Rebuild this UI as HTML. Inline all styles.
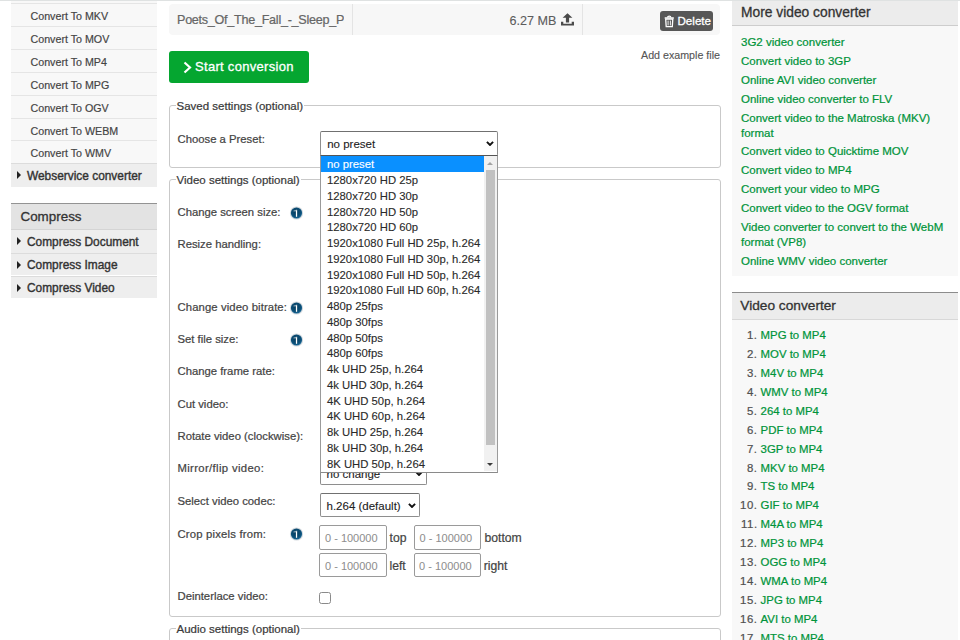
<!DOCTYPE html>
<html><head><meta charset="utf-8">
<style>
*{box-sizing:border-box;margin:0;padding:0}
html,body{width:960px;height:640px;overflow:hidden;background:#fff}
body{position:relative;font-family:"Liberation Sans",sans-serif;color:#444;-webkit-text-stroke:0.22px}
.a{position:absolute;white-space:nowrap}
.t{position:absolute;white-space:nowrap;height:16px;line-height:16px}
/* left sidebar */
.lrow{position:absolute;left:11px;width:146px;background:#f8f8f8;border-top:1.6px solid #e5e5e5}
.lrow span{position:absolute;left:19.5px;font-size:10.7px;color:#444;line-height:16px;top:3.9px;-webkit-text-stroke:.18px}
.grow{position:absolute;left:11px;width:146px;background:#eeeeee;border-top:1px solid #dcdcdc}
.grow span{position:absolute;left:16px;font-size:11.9px;color:#333;line-height:16px;top:3.6px;-webkit-text-stroke:.38px}
.tri{position:absolute;left:6px;top:7px;width:0;height:0;border-left:4.5px solid #222;border-top:4px solid transparent;border-bottom:4px solid transparent}
/* main */
.fs{position:absolute;left:169px;width:552px;border:1.5px solid #c9c9c9;border-radius:3px}
.lg{position:absolute;left:5.5px;top:-7.8px;background:#fff;padding:0 1px;font-size:11.5px;line-height:16px;color:#3a3a3a}
.lbl{position:absolute;left:177.5px;font-size:11.3px;line-height:16px;color:#444;white-space:nowrap}
.info{position:absolute;left:289px;width:15px;height:14px}
.sel{position:absolute;left:319.5px;border:1px solid #8e8e8e;border-top-color:#707070;border-radius:2px;background:#fff;font-size:11.5px;color:#222;-webkit-text-stroke:.1px}
.sel span{position:absolute;left:6px;line-height:16px}
.inp{position:absolute;border:1px solid #9a9a9a;border-radius:2px;background:#fff;width:66.5px;height:24px;font-size:11px;color:#8e8e8e;-webkit-text-stroke:.05px}
.inp span{position:absolute;left:4.6px;top:3.6px;line-height:16px}
.opt{position:absolute;left:6.5px;font-size:11.3px;line-height:15.72px;color:#2a2a2a;white-space:nowrap;-webkit-text-stroke:.12px}
/* right */
.rh{position:absolute;left:732px;width:226px;background:#ececec}
.rl{position:absolute;left:741px;font-size:11.5px;line-height:15px;color:#00943a;white-space:nowrap}
.oln{position:absolute;font-size:11.4px;line-height:16px;color:#505050;text-align:right;width:30px;left:727.6px;letter-spacing:.55px;white-space:nowrap}
.olt{position:absolute;left:760.6px;font-size:11.4px;line-height:16px;color:#00943a;white-space:nowrap}
</style></head><body>

<svg width="0" height="0" style="position:absolute"><defs><radialGradient id="ig" cx="45%" cy="40%" r="60%"><stop offset="0" stop-color="#073d5e"/><stop offset=".7" stop-color="#0b4e76"/><stop offset="1" stop-color="#1c6b9b"/></radialGradient></defs></svg>
<!-- top line -->
<div class="a" style="left:0;top:0;width:960px;height:1px;background:#dfe2e2"></div>

<!-- LEFT SIDEBAR -->
<div class="a" style="left:11px;top:1px;width:146px;height:2.5px;background:#f8f8f8"></div>
<div class="lrow" style="top:3.2px;height:23px"><span>Convert To MKV</span></div>
<div class="lrow" style="top:26.2px;height:23px"><span>Convert To MOV</span></div>
<div class="lrow" style="top:49.2px;height:23px"><span>Convert To MP4</span></div>
<div class="lrow" style="top:72.2px;height:22.6px"><span>Convert To MPG</span></div>
<div class="lrow" style="top:94.8px;height:22.9px"><span>Convert To OGV</span></div>
<div class="lrow" style="top:117.7px;height:22.75px"><span>Convert To WEBM</span></div>
<div class="lrow" style="top:140.45px;height:22.75px"><span>Convert To WMV</span></div>
<div class="grow" style="top:163.3px;height:23.6px"><div class="tri"></div><span>Webservice converter</span></div>

<div class="a" style="left:11px;top:203px;width:146px;height:27px;background:#e3e3e3;border-top:1.4px solid #939393;border-bottom:1.3px solid #d4d4d4"></div>
<div class="t" style="left:20.5px;top:209.2px;font-size:13.4px;color:#333;-webkit-text-stroke:.3px">Compress</div>
<div class="grow" style="top:230px;height:22.7px;border-top:none"><div class="tri"></div><span>Compress Document</span></div>
<div class="grow" style="top:252.7px;height:22.8px"><div class="tri"></div><span>Compress Image</span></div>
<div class="grow" style="top:275.5px;height:22.5px"><div class="tri"></div><span>Compress Video</span></div>

<!-- MAIN -->
<div class="a" style="left:169px;top:3.5px;width:551px;height:31.5px;background:#f7f7f7;border-radius:4px"></div>
<div class="a" style="left:351.5px;top:3.5px;width:1px;height:31.5px;background:#e4e4e4"></div>
<div class="a" style="left:581.5px;top:3.5px;width:1px;height:31.5px;background:#e4e4e4"></div>
<div class="a" style="left:177px;top:10.8px;width:167px;height:18px;overflow:hidden;font-size:12.6px;line-height:18px;color:#666;letter-spacing:-.27px">Poets_Of_The_Fall_-_Sleep_Paradise.mp4</div>
<div class="t" style="left:509.5px;top:12.7px;font-size:12.6px;color:#5c5c5c;-webkit-text-stroke:.1px">6.27 MB</div>
<svg class="a" style="left:561px;top:12px" width="14" height="14" viewBox="0 0 14 14"><path d="M6.5 1.2 L11.4 5.8 H8.1 V10.6 H4.9 V5.8 H1.6 Z" fill="#4a4a4a"/><path d="M0 9.8 H2.3 V11.7 H10.7 V9.8 H13 V13.6 H0 Z" fill="#4a4a4a"/></svg>
<div class="a" style="left:660px;top:10.8px;width:52.5px;height:20px;background:#575757;border-radius:3px"></div>
<svg class="a" style="left:664px;top:15px" width="11" height="13" viewBox="0 0 11 13"><path d="M3.6 2.4 Q3.6 1.1 5.25 1.1 Q6.9 1.1 6.9 2.4" stroke="#fff" stroke-width="1.1" fill="none"/><path d="M0.7 3 H9.8" stroke="#fff" stroke-width="1.5"/><path d="M1.7 4.2 H8.8 L8.3 11.7 H2.2 Z" stroke="#fff" stroke-width="1.3" fill="none"/><path d="M4.1 5.6 V10.4 M6.4 5.6 V10.4" stroke="#fff" stroke-width=".9"/></svg>
<div class="t" style="left:677.5px;top:12.5px;font-size:11.6px;color:#fff;-webkit-text-stroke:.3px #fff">Delete</div>
<div class="t" style="left:641px;top:47.3px;font-size:10.7px;color:#555;-webkit-text-stroke:.12px">Add example file</div>

<div class="a" style="left:169px;top:51px;width:140px;height:31.7px;background:#05a630;border-radius:3px"></div>
<svg class="a" style="left:183px;top:61px" width="9" height="13" viewBox="0 0 9 13"><path d="M1.5 1.5 L7 6.5 L1.5 11.5" stroke="#fff" stroke-width="2.2" fill="none"/></svg>
<div class="t" style="left:195px;top:58.8px;font-size:13px;color:#fff;letter-spacing:.3px;-webkit-text-stroke:.3px #fff">Start conversion</div>

<!-- saved settings -->
<div class="fs" style="top:105px;height:63px"><div class="lg">Saved settings (optional)</div></div>
<div class="lbl" style="top:130.7px">Choose a Preset:</div>
<div class="sel" style="top:131px;width:178px;height:24.5px"><span style="left:6.7px;top:3.5px">no preset</span></div>
<svg class="a" style="left:486px;top:141px" width="8" height="5" viewBox="0 0 8 5"><path d="M0.9 0.9 L4 4 L7.1 0.9" stroke="#111" stroke-width="1.9" fill="none"/></svg>

<!-- video settings -->
<div class="fs" style="top:179px;height:437.6px"><div class="lg">Video settings (optional)</div></div>
<div class="lbl" style="top:203.7px">Change screen size:</div>
<div class="info" style="top:206.0px"><svg width="15" height="14" viewBox="0 0 15 14"><circle cx="7.5" cy="7" r="6.6" fill="#d3d8dc"/><circle cx="7.5" cy="7" r="5.6" fill="url(#ig)"/><path d="M4.5 4.5 L8.1 3.4 V5.2 L4.5 5.6 Z" fill="#fff" fill-opacity=".5"/><rect x="6.9" y="4.4" width="1.25" height="6.4" fill="#fff"/></svg></div>
<div class="lbl" style="top:236.2px">Resize handling:</div>
<div class="lbl" style="top:299px;letter-spacing:.1px">Change video bitrate:</div>
<div class="info" style="top:300.5px"><svg width="15" height="14" viewBox="0 0 15 14"><circle cx="7.5" cy="7" r="6.6" fill="#d3d8dc"/><circle cx="7.5" cy="7" r="5.6" fill="url(#ig)"/><path d="M4.5 4.5 L8.1 3.4 V5.2 L4.5 5.6 Z" fill="#fff" fill-opacity=".5"/><rect x="6.9" y="4.4" width="1.25" height="6.4" fill="#fff"/></svg></div>
<div class="lbl" style="top:331.3px">Set file size:</div>
<div class="info" style="top:332.5px"><svg width="15" height="14" viewBox="0 0 15 14"><circle cx="7.5" cy="7" r="6.6" fill="#d3d8dc"/><circle cx="7.5" cy="7" r="5.6" fill="url(#ig)"/><path d="M4.5 4.5 L8.1 3.4 V5.2 L4.5 5.6 Z" fill="#fff" fill-opacity=".5"/><rect x="6.9" y="4.4" width="1.25" height="6.4" fill="#fff"/></svg></div>
<div class="lbl" style="top:363.3px">Change frame rate:</div>
<div class="lbl" style="top:395.7px">Cut video:</div>
<div class="lbl" style="top:427.7px">Rotate video (clockwise):</div>
<div class="lbl" style="top:460.4px;letter-spacing:.35px">Mirror/flip video:</div>
<div class="sel" style="top:461px;width:107px;height:24px"><span style="top:4px">no change</span></div>
<svg class="a" style="left:415px;top:471px" width="8" height="5" viewBox="0 0 8 5"><path d="M0.9 0.9 L4 4 L7.1 0.9" stroke="#111" stroke-width="1.9" fill="none"/></svg>
<div class="lbl" style="top:493px">Select video codec:</div>
<div class="sel" style="top:493.2px;width:100px;height:24px"><span style="top:3.5px">h.264 (default)</span></div>
<svg class="a" style="left:408px;top:503px" width="8" height="5" viewBox="0 0 8 5"><path d="M0.9 0.9 L4 4 L7.1 0.9" stroke="#111" stroke-width="1.9" fill="none"/></svg>
<div class="lbl" style="top:525.7px;letter-spacing:.19px">Crop pixels from:</div>
<div class="info" style="top:527.0px"><svg width="15" height="14" viewBox="0 0 15 14"><circle cx="7.5" cy="7" r="6.6" fill="#d3d8dc"/><circle cx="7.5" cy="7" r="5.6" fill="url(#ig)"/><path d="M4.5 4.5 L8.1 3.4 V5.2 L4.5 5.6 Z" fill="#fff" fill-opacity=".5"/><rect x="6.9" y="4.4" width="1.25" height="6.4" fill="#fff"/></svg></div>
<div class="inp" style="left:319.4px;top:525.2px;width:67.3px;height:24.5px"><span>0 - 100000</span></div>
<div class="t" style="left:389.5px;top:530px;font-size:12.2px;color:#444">top</div>
<div class="inp" style="left:414px;top:525.2px;width:67px;height:24.5px"><span>0 - 100000</span></div>
<div class="t" style="left:484.5px;top:530px;font-size:12.2px;color:#444">bottom</div>
<div class="inp" style="left:319.4px;top:553.1px;width:67.3px;height:24.4px"><span>0 - 100000</span></div>
<div class="t" style="left:389.5px;top:557.5px;font-size:12.2px;color:#444">left</div>
<div class="inp" style="left:413.5px;top:553.1px;width:67px;height:24.4px"><span>0 - 100000</span></div>
<div class="t" style="left:483.7px;top:557.5px;font-size:12.2px;color:#444">right</div>
<div class="lbl" style="top:588.3px">Deinterlace video:</div>
<div class="a" style="left:319.3px;top:592.2px;width:12px;height:12px;border:1px solid #8a8a8a;border-radius:2.5px;background:#fff"></div>

<!-- audio -->
<div class="fs" style="top:627.6px;height:40px"><div class="lg">Audio settings (optional)</div></div>

<!-- listbox -->
<div class="a" style="left:319.5px;top:154.6px;width:178.3px;height:318px;background:#fff;border:1px solid #9a9a9a;border-top:1.6px solid #555;border-bottom:1.4px solid #8a8a8a">
  <div class="a" style="left:0;top:0;width:163.5px;height:16px;background:#0a90ff"></div>
  <div class="opt" style="top:1.90px; color:#fff;">no preset</div>
  <div class="opt" style="top:17.65px;">1280x720 HD 25p</div>
  <div class="opt" style="top:33.40px;">1280x720 HD 30p</div>
  <div class="opt" style="top:49.15px;">1280x720 HD 50p</div>
  <div class="opt" style="top:64.90px;">1280x720 HD 60p</div>
  <div class="opt" style="top:80.65px;">1920x1080 Full HD 25p, h.264</div>
  <div class="opt" style="top:96.40px;">1920x1080 Full HD 30p, h.264</div>
  <div class="opt" style="top:112.15px;">1920x1080 Full HD 50p, h.264</div>
  <div class="opt" style="top:127.90px;">1920x1080 Full HD 60p, h.264</div>
  <div class="opt" style="top:143.65px;">480p 25fps</div>
  <div class="opt" style="top:159.40px;">480p 30fps</div>
  <div class="opt" style="top:175.15px;">480p 50fps</div>
  <div class="opt" style="top:190.90px;">480p 60fps</div>
  <div class="opt" style="top:206.65px;">4k UHD 25p, h.264</div>
  <div class="opt" style="top:222.40px;">4k UHD 30p, h.264</div>
  <div class="opt" style="top:238.15px;">4K UHD 50p, h.264</div>
  <div class="opt" style="top:253.90px;">4K UHD 60p, h.264</div>
  <div class="opt" style="top:269.65px;">8k UHD 25p, h.264</div>
  <div class="opt" style="top:285.40px;">8k UHD 30p, h.264</div>
  <div class="opt" style="top:301.15px;">8K UHD 50p, h.264</div>

  <div class="a" style="left:163.5px;top:0;width:12.5px;height:315.5px;background:#f1f1f1"></div>
  <div class="a" style="left:165px;top:14.5px;width:9.5px;height:275px;background:#c1c1c1"></div>
  <div class="a" style="left:166.5px;top:6px;width:0;height:0;border-left:3.5px solid transparent;border-right:3.5px solid transparent;border-bottom:3.5px solid #a3a3a3"></div>
  <div class="a" style="left:166.5px;top:307px;width:0;height:0;border-left:3.5px solid transparent;border-right:3.5px solid transparent;border-top:3.5px solid #3a3a3a"></div>
</div>

<!-- RIGHT SIDEBAR -->
<div class="rh" style="top:1px;height:25px;border-bottom:1.5px solid #cdcdcd"></div>
<div class="t" style="left:741px;top:5.1px;font-size:13.8px;color:#333;-webkit-text-stroke:.3px">More video converter</div>
<div class="a" style="left:732px;top:26px;width:226px;height:250px;background:#f8f8f8"></div>
<div class="rl" style="top:34.8px">3G2 video converter</div>
<div class="rl" style="top:53.8px">Convert video to 3GP</div>
<div class="rl" style="top:72.8px">Online AVI video converter</div>
<div class="rl" style="top:91.8px">Online video converter to FLV</div>
<div class="rl" style="top:110.8px">Convert video to the Matroska (MKV)<br>format</div>
<div class="rl" style="top:144.3px">Convert video to Quicktime MOV</div>
<div class="rl" style="top:163.3px">Convert video to MP4</div>
<div class="rl" style="top:182.3px">Convert your video to MPG</div>
<div class="rl" style="top:201.3px">Convert video to the OGV format</div>
<div class="rl" style="top:220.3px">Video converter to convert to the WebM<br>format (VP8)</div>
<div class="rl" style="top:254.3px">Online WMV video converter</div>

<div class="rh" style="top:292px;height:27.5px;border-top:1.5px solid #8c8c8c;border-bottom:1.5px solid #d8d8d8"></div>
<div class="t" style="left:740.3px;top:298px;font-size:13.7px;color:#333;-webkit-text-stroke:.3px">Video converter</div>
<div class="a" style="left:732px;top:319.5px;width:226px;height:321px;background:#f8f8f8"></div>
<div class="oln" style="top:327.00px">1.</div><div class="olt" style="top:327.00px">MPG to MP4</div>
<div class="oln" style="top:345.93px">2.</div><div class="olt" style="top:345.93px">MOV to MP4</div>
<div class="oln" style="top:364.86px">3.</div><div class="olt" style="top:364.86px">M4V to MP4</div>
<div class="oln" style="top:383.79px">4.</div><div class="olt" style="top:383.79px">WMV to MP4</div>
<div class="oln" style="top:402.72px">5.</div><div class="olt" style="top:402.72px">264 to MP4</div>
<div class="oln" style="top:421.65px">6.</div><div class="olt" style="top:421.65px">PDF to MP4</div>
<div class="oln" style="top:440.58px">7.</div><div class="olt" style="top:440.58px">3GP to MP4</div>
<div class="oln" style="top:459.51px">8.</div><div class="olt" style="top:459.51px">MKV to MP4</div>
<div class="oln" style="top:478.44px">9.</div><div class="olt" style="top:478.44px">TS to MP4</div>
<div class="oln" style="top:497.37px">10.</div><div class="olt" style="top:497.37px">GIF to MP4</div>
<div class="oln" style="top:516.30px">11.</div><div class="olt" style="top:516.30px">M4A to MP4</div>
<div class="oln" style="top:535.23px">12.</div><div class="olt" style="top:535.23px">MP3 to MP4</div>
<div class="oln" style="top:554.16px">13.</div><div class="olt" style="top:554.16px">OGG to MP4</div>
<div class="oln" style="top:573.09px">14.</div><div class="olt" style="top:573.09px">WMA to MP4</div>
<div class="oln" style="top:592.02px">15.</div><div class="olt" style="top:592.02px">JPG to MP4</div>
<div class="oln" style="top:610.95px">16.</div><div class="olt" style="top:610.95px">AVI to MP4</div>
<div class="oln" style="top:629.88px">17.</div><div class="olt" style="top:629.88px">MTS to MP4</div>

</body></html>
